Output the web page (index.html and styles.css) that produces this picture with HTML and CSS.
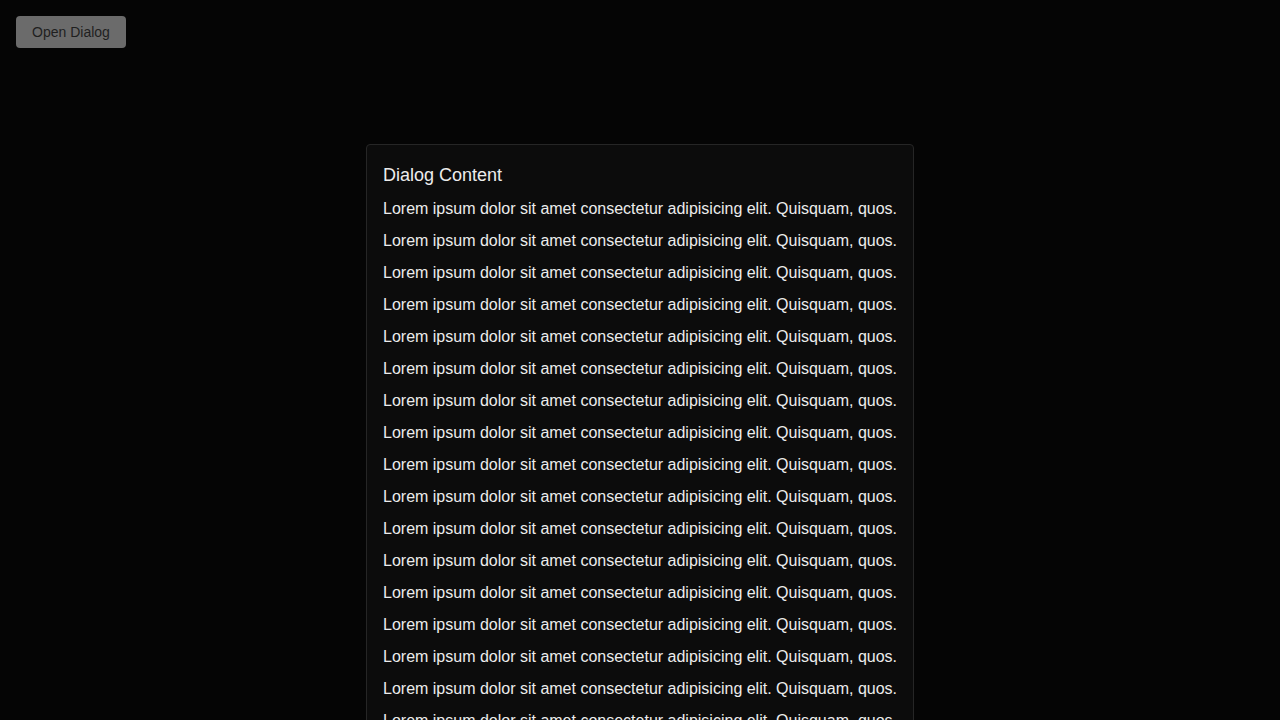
FILE: index.html
```html
<!DOCTYPE html>
<html>
<head>
<meta charset="utf-8">
<link rel="stylesheet" href="styles.css">
</head>
<body>
<div class="page">
  <button class="open-btn">Open Dialog</button>
</div>
<div class="overlay">
  <div class="dialog">
    <h2 class="dialog-title">Dialog Content</h2>
    <p class="line">Lorem ipsum dolor sit amet consectetur adipisicing elit. Quisquam, quos.</p>
    <p class="line">Lorem ipsum dolor sit amet consectetur adipisicing elit. Quisquam, quos.</p>
    <p class="line">Lorem ipsum dolor sit amet consectetur adipisicing elit. Quisquam, quos.</p>
    <p class="line">Lorem ipsum dolor sit amet consectetur adipisicing elit. Quisquam, quos.</p>
    <p class="line">Lorem ipsum dolor sit amet consectetur adipisicing elit. Quisquam, quos.</p>
    <p class="line">Lorem ipsum dolor sit amet consectetur adipisicing elit. Quisquam, quos.</p>
    <p class="line">Lorem ipsum dolor sit amet consectetur adipisicing elit. Quisquam, quos.</p>
    <p class="line">Lorem ipsum dolor sit amet consectetur adipisicing elit. Quisquam, quos.</p>
    <p class="line">Lorem ipsum dolor sit amet consectetur adipisicing elit. Quisquam, quos.</p>
    <p class="line">Lorem ipsum dolor sit amet consectetur adipisicing elit. Quisquam, quos.</p>
    <p class="line">Lorem ipsum dolor sit amet consectetur adipisicing elit. Quisquam, quos.</p>
    <p class="line">Lorem ipsum dolor sit amet consectetur adipisicing elit. Quisquam, quos.</p>
    <p class="line">Lorem ipsum dolor sit amet consectetur adipisicing elit. Quisquam, quos.</p>
    <p class="line">Lorem ipsum dolor sit amet consectetur adipisicing elit. Quisquam, quos.</p>
    <p class="line">Lorem ipsum dolor sit amet consectetur adipisicing elit. Quisquam, quos.</p>
    <p class="line">Lorem ipsum dolor sit amet consectetur adipisicing elit. Quisquam, quos.</p>
    <p class="line">Lorem ipsum dolor sit amet consectetur adipisicing elit. Quisquam, quos.</p>
    <p class="line">Lorem ipsum dolor sit amet consectetur adipisicing elit. Quisquam, quos.</p>
    <p class="line">Lorem ipsum dolor sit amet consectetur adipisicing elit. Quisquam, quos.</p>
    <p class="line">Lorem ipsum dolor sit amet consectetur adipisicing elit. Quisquam, quos.</p>
  </div>
</div>
</body>
</html>
```
FILE: styles.css
```css
html, body {
  margin: 0;
  padding: 0;
  background: #050505;
  font-family: "Liberation Sans", Arial, sans-serif;
  height: 100%;
  overflow: hidden;
}
.page {
  padding: 16px;
}
.open-btn {
  display: block;
  width: 110px;
  height: 32px;
  border: none;
  border-radius: 4px;
  background: #6b6b6b;
  color: #1f1f1f;
  font-family: "Liberation Sans", Arial, sans-serif;
  font-size: 14px;
  padding: 0;
}
.overlay {
  position: fixed;
  inset: 0;
  display: flex;
  justify-content: center;
  align-items: flex-start;
  padding-top: 144px;
}
.dialog {
  width: 548px;
  box-sizing: border-box;
  background: #0c0c0c;
  border: 1px solid #262626;
  border-radius: 4px;
  padding: 16px;
  display: flex;
  flex-direction: column;
  gap: 8px;
  color: #ececec;
}
.dialog-title {
  margin: 0;
  font-size: 18px;
  font-weight: normal;
  line-height: 28px;
}
.line {
  margin: 0;
  font-size: 16px;
  line-height: 24px;
  white-space: nowrap;
}
```
